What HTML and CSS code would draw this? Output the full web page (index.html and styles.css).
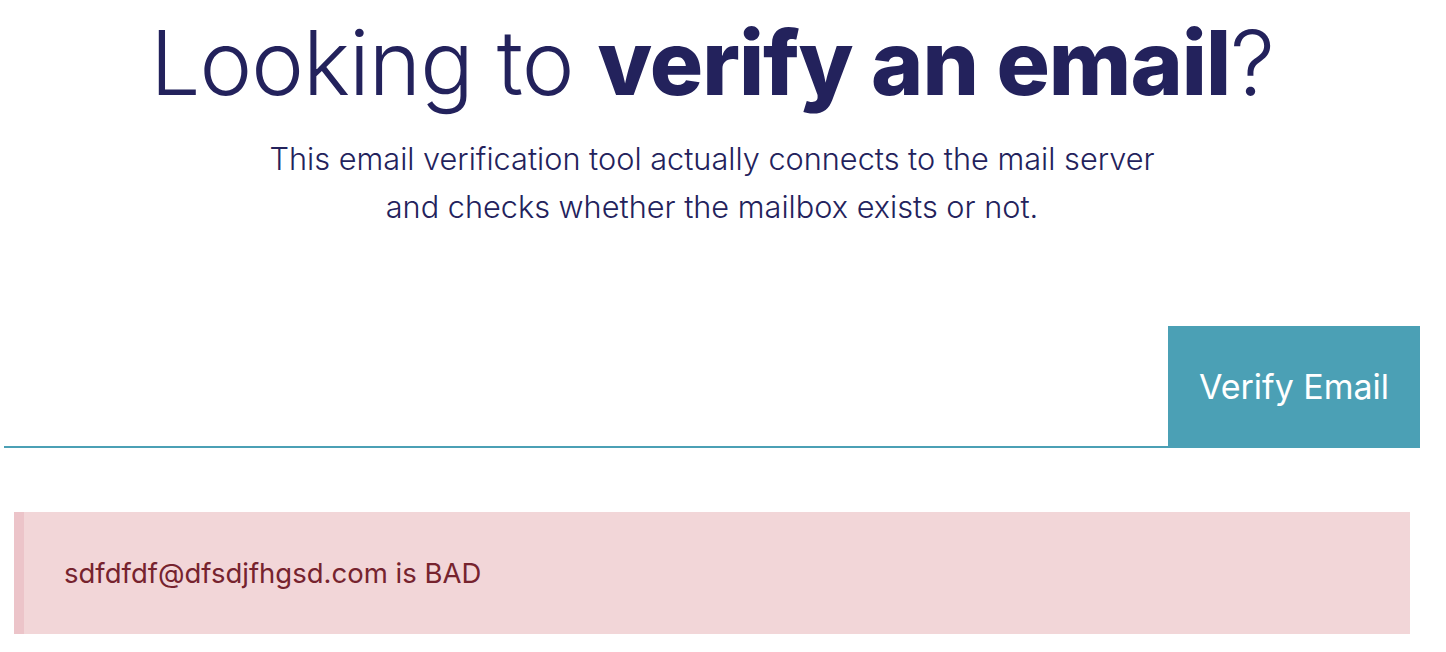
FILE: index.html
```html
<!DOCTYPE html>
<html lang="en">
<head>
<meta charset="utf-8">
<title>Verify an email</title>
<link rel="stylesheet" href="styles.css">
</head>
<body>
<main class="page">
  <section class="hero">
    <h1 class="hero-title">Looking to <strong>verify an email</strong>?</h1>
    <p class="hero-sub">This email verification tool actually connects to the mail server<br>and checks whether the mailbox exists or not.</p>
  </section>
  <form class="verify-form">
    <input class="verify-input" type="email" aria-label="Email address">
    <button class="verify-btn" type="button">Verify Email</button>
  </form>
  <div class="alert alert-bad">sdfdfdf@dfsdjfhgsd.com is BAD</div>
</main>
</body>
</html>
```
FILE: styles.css
```css
html, body {
  margin: 0;
  padding: 0;
  background: #ffffff;
}
body {
  font-family: Inter, "Noto Sans", sans-serif;
  color: #23225c;
}
.page {
  padding: 0 26px 0 4px;
}
.hero {
  text-align: center;
}
.hero-title {
  margin: 0;
  padding-top: 14px;
  font-size: 89px;
  font-weight: 300;
  line-height: 1.1;
  letter-spacing: -1px;
  color: #23225c;
}
.hero-title strong {
  font-weight: 800;
}
.hero-sub {
  margin: 23px 0 0;
  font-size: 30.7px;
  font-weight: 300;
  line-height: 48px;
  color: #23225c;
}
.verify-form {
  display: flex;
  margin-top: 95px;
  align-items: stretch;
}
.verify-input {
  flex: 1;
  border: 0;
  border-bottom: 2px solid #4ba0b5;
  outline: none;
  background: transparent;
  font: inherit;
  font-size: 28px;
  padding: 0 16px;
  margin: 0;
}
.verify-btn {
  width: 252px;
  height: 122px;
  border: 0;
  margin: 0;
  background: #4ba0b5;
  color: #ffffff;
  font-family: Inter, "Noto Sans", sans-serif;
  font-size: 34px;
  font-weight: 400;
  cursor: pointer;
}
.alert {
  margin: 64px 10px 0;
  height: 122px;
  box-sizing: border-box;
  display: flex;
  align-items: center;
  padding-left: 40px;
  background: #f2d6d8;
  border-left: 10px solid #ecc4c9;
  font-size: 27.5px;
  font-weight: 400;
  color: #76232e;
}
```
